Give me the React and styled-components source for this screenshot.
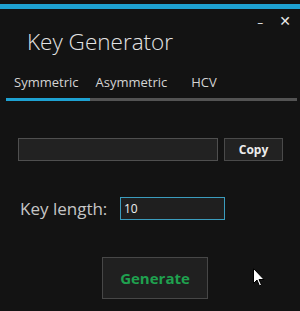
import React from 'react';
import styled, { createGlobalStyle } from 'styled-components';

const GlobalStyle = createGlobalStyle`
  html, body {
    margin: 0;
    padding: 0;
    background: #131313;
  }
  * {
    box-sizing: border-box;
  }
`;

const Window = styled.div`
  position: relative;
  width: 300px;
  height: 311px;
  background: #131313;
  padding-top: 4px;
  font-family: "Segoe UI", "Open Sans", "Noto Sans", sans-serif;
  overflow: hidden;
`;

const AccentBar = styled.div`
  height: 5px;
  background: #1ea2d2;
`;

const Controls = styled.div`
  display: flex;
  justify-content: flex-end;
  align-items: center;
  gap: 16px;
  height: 22px;
  padding: 2px 9px 0 0;
`;

const ControlButton = styled.span`
  color: #e8e8e8;
  font-size: ${(p) => p.size}px;
  line-height: 1;
  font-family: "DejaVu Sans", sans-serif;
  margin-top: ${(p) => p.shift || 0}px;
`;

const Title = styled.h1`
  margin: -3px 0 0;
  padding-left: 27px;
  font-size: 22.5px;
  font-weight: 300;
  color: #e4e4e4;
  line-height: 28px;
`;

const TabRow = styled.div`
  display: flex;
  margin-top: 14px;
  padding-left: 14px;
  height: 24px;
  align-items: center;
`;

const Tab = styled.span`
  font-size: 13px;
  color: #d4d4d4;
  margin-right: ${(p) => p.gap}px;
`;

const TabTrack = styled.div`
  margin: 4px 3px 0 6px;
  height: 3px;
  background: #535353;
`;

const TabIndicator = styled.div`
  width: 84px;
  height: 100%;
  background: #1ea2d2;
`;

const Content = styled.div`
  padding: 37px 17px 0 18px;
`;

const KeyRow = styled.div`
  display: flex;
  gap: 6px;
`;

const KeyField = styled.div`
  width: 200px;
  height: 23px;
  background: #222;
  border: 1px solid #4f4f4f;
`;

const CopyButton = styled.button`
  width: 59px;
  height: 23px;
  background: #222;
  border: 1px solid #4a4a4a;
  color: #ececec;
  font-family: inherit;
  font-size: 12px;
  font-weight: 700;
  padding: 0;
`;

const LengthRow = styled.div`
  display: flex;
  align-items: center;
  margin-top: 36px;
  padding-left: 2px;
`;

const Label = styled.span`
  font-size: 17px;
  color: #c6c6c6;
  width: 100px;
`;

const LengthInput = styled.div`
  width: 105px;
  height: 23px;
  background: #1f1f1f;
  border: 1px solid #3b9cbd;
  color: #f0f0f0;
  font-size: 12px;
  line-height: 21px;
  padding-left: 3px;
`;

const ButtonRow = styled.div`
  display: flex;
  padding-left: 84px;
  margin-top: 37px;
`;

const GenerateButton = styled.button`
  width: 106px;
  height: 42px;
  background: #202020;
  border: 1px solid #474747;
  color: #1fa14f;
  font-family: inherit;
  font-size: 15px;
  font-weight: 700;
  padding: 0;
`;

const Cursor = styled.svg`
  position: absolute;
  left: 253px;
  top: 268px;
`;

export default function App() {
  return (
    <>
      <GlobalStyle />
      <Window>
        <AccentBar />
        <Controls>
          <ControlButton size={12} shift={3}>–</ControlButton>
          <ControlButton size={14}>✕</ControlButton>
        </Controls>
        <Title>Key Generator</Title>
        <TabRow>
          <Tab gap={17}>Symmetric</Tab>
          <Tab gap={24}>Asymmetric</Tab>
          <Tab gap={0}>HCV</Tab>
        </TabRow>
        <TabTrack>
          <TabIndicator />
        </TabTrack>
        <Content>
          <KeyRow>
            <KeyField />
            <CopyButton>Copy</CopyButton>
          </KeyRow>
          <LengthRow>
            <Label>Key length:</Label>
            <LengthInput>10</LengthInput>
          </LengthRow>
          <ButtonRow>
            <GenerateButton>Generate</GenerateButton>
          </ButtonRow>
        </Content>
        <Cursor width="12" height="19" viewBox="0 0 12 19">
          <path d="M0.5 0.5 L0.5 15.5 L4 12 L6.5 18 L8.5 17 L6 11.5 L11 11.5 Z" fill="#fff" stroke="#000" strokeWidth="1" />
        </Cursor>
      </Window>
    </>
  );
}
